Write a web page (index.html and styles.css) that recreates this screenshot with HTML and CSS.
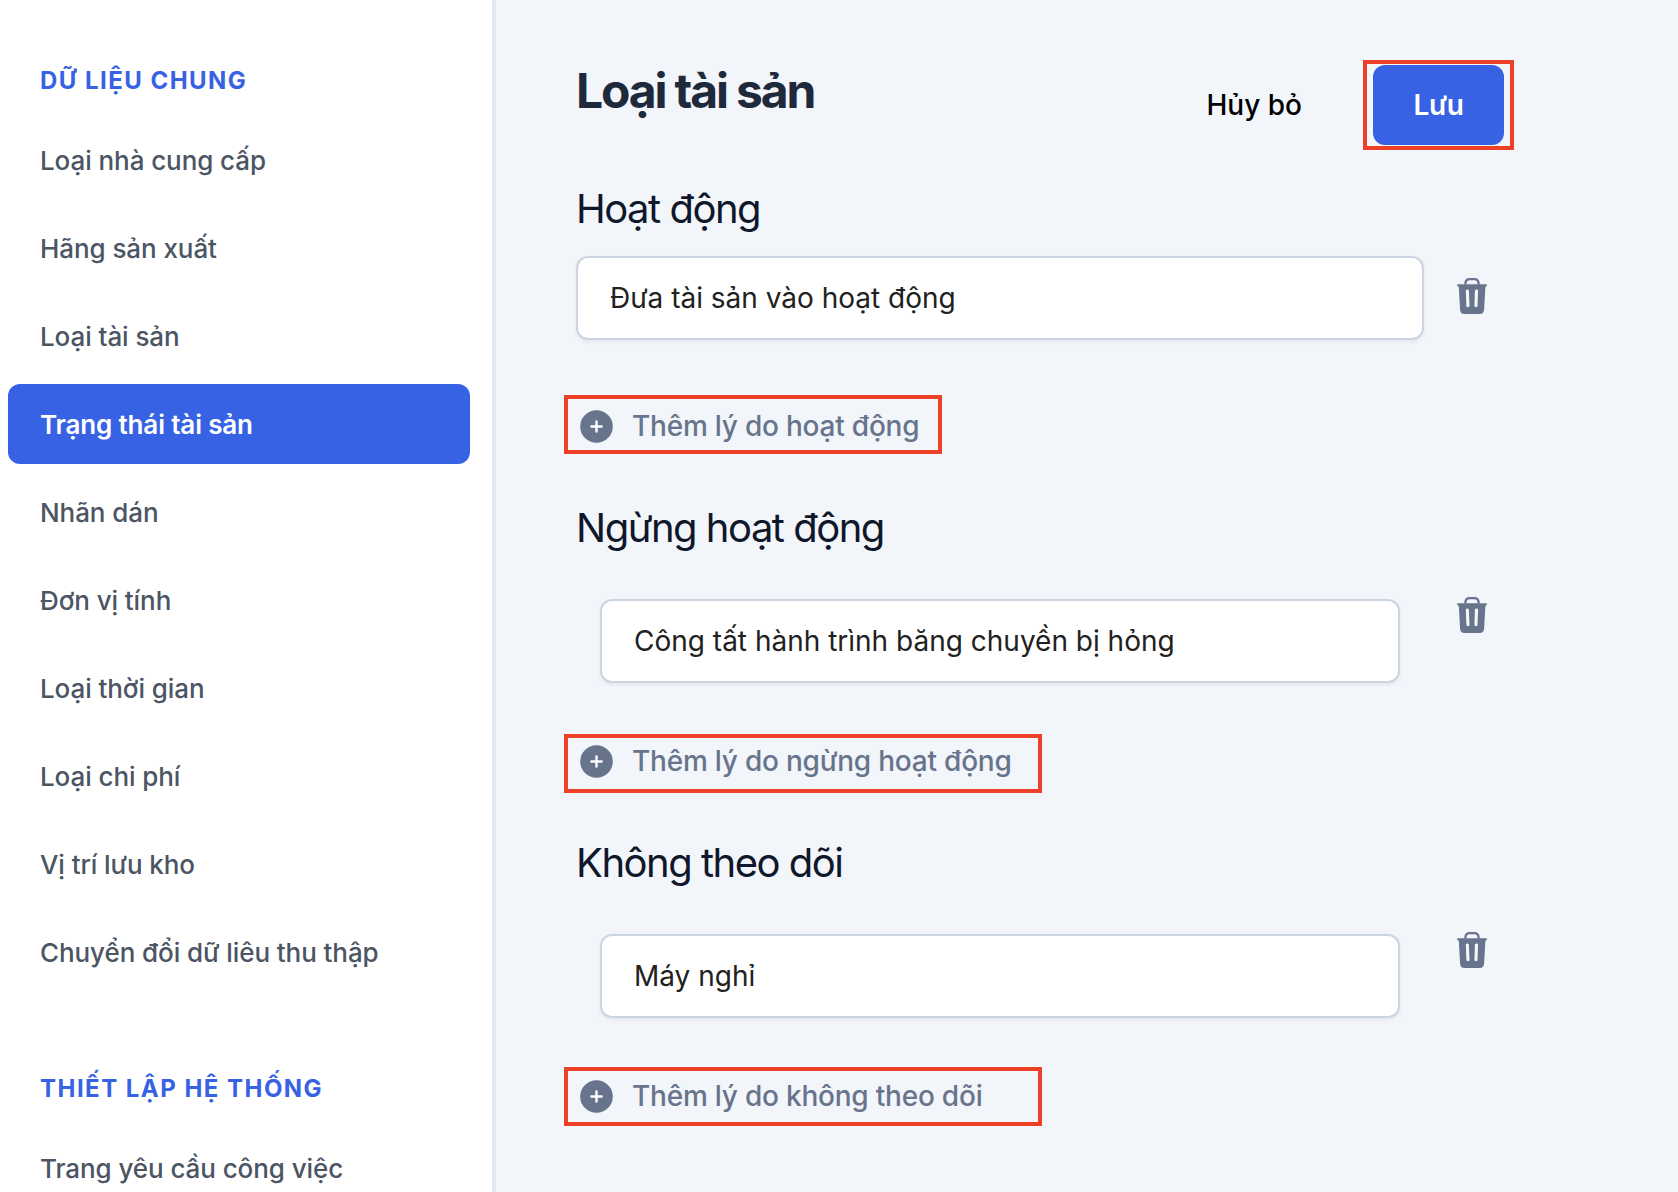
FILE: index.html
```html
<!DOCTYPE html>
<html lang="vi">
<head>
<meta charset="utf-8">
<title>Loại tài sản</title>
<link rel="stylesheet" href="styles.css">
</head>
<body>
<svg class="sprite" aria-hidden="true">
  <symbol id="trash" viewBox="0 0 30 36">
    <path class="trash-handle" d="M8.4 6.5V5.6Q8.6 1.2 12.6 1.2H17.4Q21.4 1.2 21.6 5.6V6.5"/>
    <path class="trash-can" fill-rule="evenodd" d="M1.2 6.2H28.8Q30 6.2 30 7.3Q30 8.5 28.4 8.7L27.1 31.8Q26.8 36 22.6 36H7.4Q3.4 36 3.1 31.8L1.8 8.7Q0 8.5 0 7.3Q0 6.2 1.2 6.2ZM8.8 12.8Q8.8 11.6 10.2 11.6Q11.8 11.6 11.9 12.8L12.5 27.9Q12.5 29.1 11 29.1Q9.5 29.1 9.4 27.9ZM17.9 12.8Q18 11.6 19.6 11.6Q21.2 11.6 21.1 12.8L20.5 27.9Q20.4 29.1 18.9 29.1Q17.4 29.1 17.4 27.9Z"/>
  </symbol>
  <symbol id="plus" viewBox="0 0 33 33">
    <circle class="plus-disc" cx="16.5" cy="16.5" r="16.3"/>
    <path class="plus-sign" d="M16.5 11.4V21.6M11.4 16.5H21.6"/>
  </symbol>
</svg>
<div class="app">
  <nav class="sidebar">
    <section class="group">
      <h2 class="group-title">DỮ LIỆU CHUNG</h2>
      <a class="item">Loại nhà cung cấp</a>
      <a class="item">Hãng sản xuất</a>
      <a class="item">Loại tài sản</a>
      <a class="item active">Trạng thái tài sản</a>
      <a class="item">Nhãn dán</a>
      <a class="item">Đơn vị tính</a>
      <a class="item">Loại thời gian</a>
      <a class="item">Loại chi phí</a>
      <a class="item">Vị trí lưu kho</a>
      <a class="item">Chuyển đổi dữ liêu thu thập</a>
    </section>
    <section class="group">
      <h2 class="group-title">THIẾT LẬP HỆ THỐNG</h2>
      <a class="item">Trang yêu cầu công việc</a>
    </section>
  </nav>
  <main class="content">
    <header class="page-header">
      <h1 class="page-title">Loại tài sản</h1>
      <div class="actions">
        <button class="btn cancel">Hủy bỏ</button>
        <button class="btn save">Lưu<span class="mark mark-save"></span></button>
      </div>
    </header>
    <section class="status">
      <h2 class="status-title">Hoạt động</h2>
      <div class="reason"><div class="field">Đưa tài sản vào hoạt động</div><svg class="trash"><use href="#trash"/></svg></div>
      <div class="add"><svg class="plus"><use href="#plus"/></svg><span class="add-label">Thêm lý do hoạt động</span><span class="mark mark-active"></span></div>
    </section>
    <section class="status">
      <h2 class="status-title">Ngừng hoạt động</h2>
      <div class="reason nested"><div class="field">Công tất hành trình băng chuyền bị hỏng</div><svg class="trash"><use href="#trash"/></svg></div>
      <div class="add"><svg class="plus"><use href="#plus"/></svg><span class="add-label">Thêm lý do ngừng hoạt động</span><span class="mark mark-stopped"></span></div>
    </section>
    <section class="status">
      <h2 class="status-title">Không theo dõi</h2>
      <div class="reason nested"><div class="field">Máy nghỉ</div><svg class="trash"><use href="#trash"/></svg></div>
      <div class="add"><svg class="plus"><use href="#plus"/></svg><span class="add-label">Thêm lý do không theo dõi</span><span class="mark mark-untracked"></span></div>
    </section>
  </main>
</div>
</body>
</html>
```
FILE: styles.css
```css
* { box-sizing: border-box; }
body { margin: 0; font-family: Inter, sans-serif; background: #f2f5fa; }
h1, h2 { margin: 0; }
.sprite { position: absolute; width: 0; height: 0; }
.app { display: flex; height: 1192px; overflow: hidden; }

.sidebar { flex: none; width: 496px; padding: 56px 22px 0 8px; background: #fff; border-right: 4px solid #e2e8f0; overflow: hidden; }
.group { display: flex; flex-direction: column; gap: 8px; height: 1008px; }
.group-title { height: 56px; padding-left: 32px; font-size: 24px; line-height: 50px; font-weight: 700; letter-spacing: 1.47px; color: #3762e3; white-space: nowrap; }
.item { flex: none; height: 80px; padding: 1px 32px 0; border-radius: 12px; font-size: 26px; line-height: 80px; font-weight: 500; letter-spacing: -0.08px; color: #4b5563; white-space: nowrap; }
.active { background: #3762e3; color: #fff; font-weight: 600; letter-spacing: -0.15px; }

.content { flex: 1; padding: 65px 174px 0 80px; background: #f2f5fa; }
.page-header { display: flex; justify-content: space-between; height: 119px; }
.page-title { font-size: 48px; line-height: 51px; font-weight: 700; letter-spacing: -2.15px; color: #1e293b; white-space: nowrap; }
.actions { display: flex; gap: 31px; }
.btn { position: relative; height: 80px; padding: 0 40px; border: 0; border-radius: 12px; background: none; font: 500 28px/80px Inter, sans-serif; color: #000; white-space: nowrap; }
.save { width: 131px; background: #3762e3; color: #fff; font-weight: 600; letter-spacing: -0.3px; }

.status-title { height: 48px; font-size: 40px; line-height: 50px; font-weight: 400; letter-spacing: -1.5px; color: #0f172a; white-space: nowrap; }
.status { height: 319px; }
.status + .status { height: 335px; }
.reason { display: flex; gap: 33px; padding: 24px 0 0; }
.field { width: 848px; height: 84px; padding: 0 32px; border: 2px solid #cbd5e1; border-radius: 12px; background: #fff; box-shadow: 0 2px 4px rgba(15, 23, 42, .06); font-size: 28px; line-height: 80px; color: #212121; white-space: nowrap; }
.trash { width: 30px; height: 36px; margin-top: 22px; }
.nested { gap: 57px; padding: 48px 0 0 24px; }
.nested .field { width: 800px; }
.nested .trash { margin-top: -2px; }
.trash-handle { fill: none; stroke: #67748b; stroke-width: 2.3; }
.trash-can { fill: #67748b; }

.add { position: relative; display: flex; align-items: center; gap: 19.5px; height: 34px; margin-top: 69px; padding-left: 3.5px; }
.nested + .add { margin-top: 61px; }
.plus { width: 33px; height: 33px; }
.plus-disc { fill: #67748b; }
.plus-sign { stroke: #fff; stroke-width: 2.4; stroke-linecap: round; }
.add-label { font-size: 28px; line-height: 34px; font-weight: 500; letter-spacing: -0.22px; color: #67748b; white-space: nowrap; }

/* Red highlight frames laid over the controls */
.mark { position: absolute; left: -12px; width: 478px; height: 59px; border: 4px solid #ec4126; pointer-events: none; }
.mark-save { left: -10px; top: -5px; width: 151px; height: 90px; }
.mark-active { top: -14px; width: 378px; }
.mark-stopped { top: -10px; }
.mark-untracked { top: -12px; }
```
